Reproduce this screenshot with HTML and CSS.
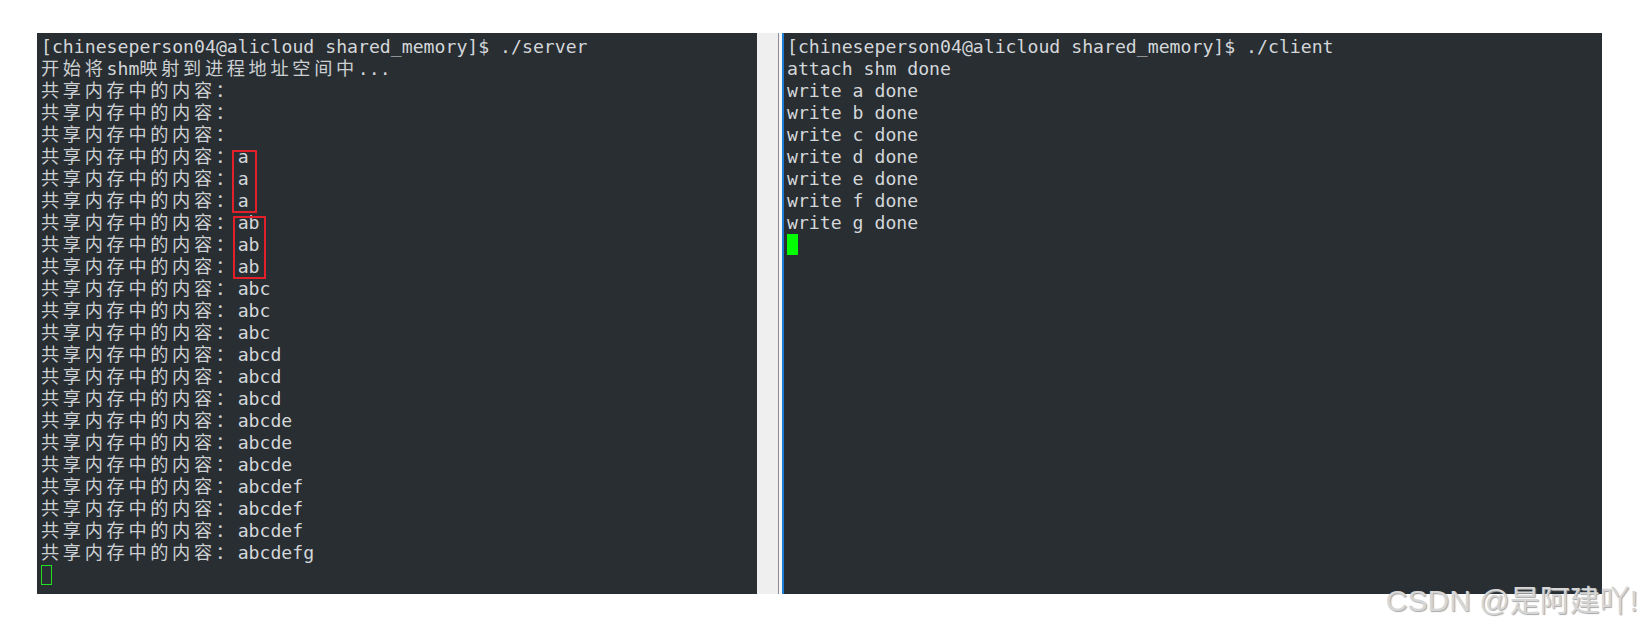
FILE: index.html
```html
<!DOCTYPE html>
<html lang="zh">
<head>
<meta charset="utf-8">
<title>shm</title>
<link rel="stylesheet" href="styles.css">
</head>
<body>
<div class="page">
  <div class="term term-left">
    <div class="line">[chineseperson04@alicloud shared_memory]$ ./server</div>
    <div class="line"><span class="w">开始将</span>shm<span class="w">映射到进程地址空间中</span>...</div>
    <div class="line"><span class="w">共享内存中的内容：</span></div>
    <div class="line"><span class="w">共享内存中的内容：</span></div>
    <div class="line"><span class="w">共享内存中的内容：</span></div>
    <div class="line"><span class="w">共享内存中的内容：</span>a</div>
    <div class="line"><span class="w">共享内存中的内容：</span>a</div>
    <div class="line"><span class="w">共享内存中的内容：</span>a</div>
    <div class="line"><span class="w">共享内存中的内容：</span>ab</div>
    <div class="line"><span class="w">共享内存中的内容：</span>ab</div>
    <div class="line"><span class="w">共享内存中的内容：</span>ab</div>
    <div class="line"><span class="w">共享内存中的内容：</span>abc</div>
    <div class="line"><span class="w">共享内存中的内容：</span>abc</div>
    <div class="line"><span class="w">共享内存中的内容：</span>abc</div>
    <div class="line"><span class="w">共享内存中的内容：</span>abcd</div>
    <div class="line"><span class="w">共享内存中的内容：</span>abcd</div>
    <div class="line"><span class="w">共享内存中的内容：</span>abcd</div>
    <div class="line"><span class="w">共享内存中的内容：</span>abcde</div>
    <div class="line"><span class="w">共享内存中的内容：</span>abcde</div>
    <div class="line"><span class="w">共享内存中的内容：</span>abcde</div>
    <div class="line"><span class="w">共享内存中的内容：</span>abcdef</div>
    <div class="line"><span class="w">共享内存中的内容：</span>abcdef</div>
    <div class="line"><span class="w">共享内存中的内容：</span>abcdef</div>
    <div class="line"><span class="w">共享内存中的内容：</span>abcdefg</div>
    <div class="line"><span class="cursor cursor-hollow"></span></div>
    <div class="mark mark-a"></div>
    <div class="mark mark-ab"></div>
  </div>
  <div class="sep">
    <div class="sep-fill"></div>
    <div class="sep-line"></div>
    <div class="sep-gap"></div>
  </div>
  <div class="term term-right">
    <div class="line">[chineseperson04@alicloud shared_memory]$ ./client</div>
    <div class="line">attach shm done</div>
    <div class="line">write a done</div>
    <div class="line">write b done</div>
    <div class="line">write c done</div>
    <div class="line">write d done</div>
    <div class="line">write e done</div>
    <div class="line">write f done</div>
    <div class="line">write g done</div>
    <div class="line"><span class="cursor cursor-solid"></span></div>
  </div>
  <div class="watermark">CSDN @是阿建吖!</div>
</div>
</body>
</html>
```
FILE: styles.css
```css
html, body {
  margin: 0;
  padding: 0;
  background: #ffffff;
}

.page {
  position: relative;
  width: 1644px;
  height: 632px;
  box-sizing: border-box;
  padding: 33px 0 0 37px;
  display: flex;
  align-items: flex-start;
}

.term {
  position: relative;
  height: 561px;
  box-sizing: border-box;
  background: #282e32;
  color: #d4d7da;
  font-family: "DejaVu Sans Mono", "Noto Sans CJK SC", monospace;
  font-size: 18.17px;
  line-height: 22px;
  padding-top: 3px;
  overflow: hidden;
}

.term-left {
  width: 720px;
  padding-left: 4px;
}

.term-right {
  width: 820px;
  padding-left: 3px;
  border-left: 2px solid #1f7fd6;
}

.line {
  height: 22px;
  white-space: pre;
}

.w {
  letter-spacing: calc(2ch - 1em);
  color: #cdd0d3;
}

.cursor {
  display: inline-block;
  vertical-align: top;
  box-sizing: border-box;
  margin-top: 1px;
}

.cursor-hollow {
  width: 11px;
  height: 20px;
  border: 1px solid #22dd22;
}

.cursor-solid {
  width: 11px;
  height: 21px;
  margin-top: 0;
  background: #00ff00;
}

.mark {
  position: absolute;
  box-sizing: border-box;
  border: 2px solid #e3202a;
}

.mark-a {
  left: 195px;
  top: 117px;
  width: 25px;
  height: 63px;
}

.mark-ab {
  left: 196px;
  top: 183px;
  width: 33px;
  height: 63px;
}

.sep {
  display: flex;
  height: 561px;
}

.sep-fill {
  width: 21px;
  background: #efefef;
}

.sep-line {
  width: 1px;
  background: #8c8a96;
}

.sep-gap {
  width: 3px;
  background: #f6f6f6;
}

.watermark {
  position: absolute;
  right: 6px;
  top: 584px;
  font-family: "Liberation Sans", "Noto Sans CJK SC", sans-serif;
  font-size: 30px;
  line-height: 34px;
  color: #d6d6d6;
  text-shadow: 1px 1px 1px #a8a8a8;
  white-space: nowrap;
}
```
